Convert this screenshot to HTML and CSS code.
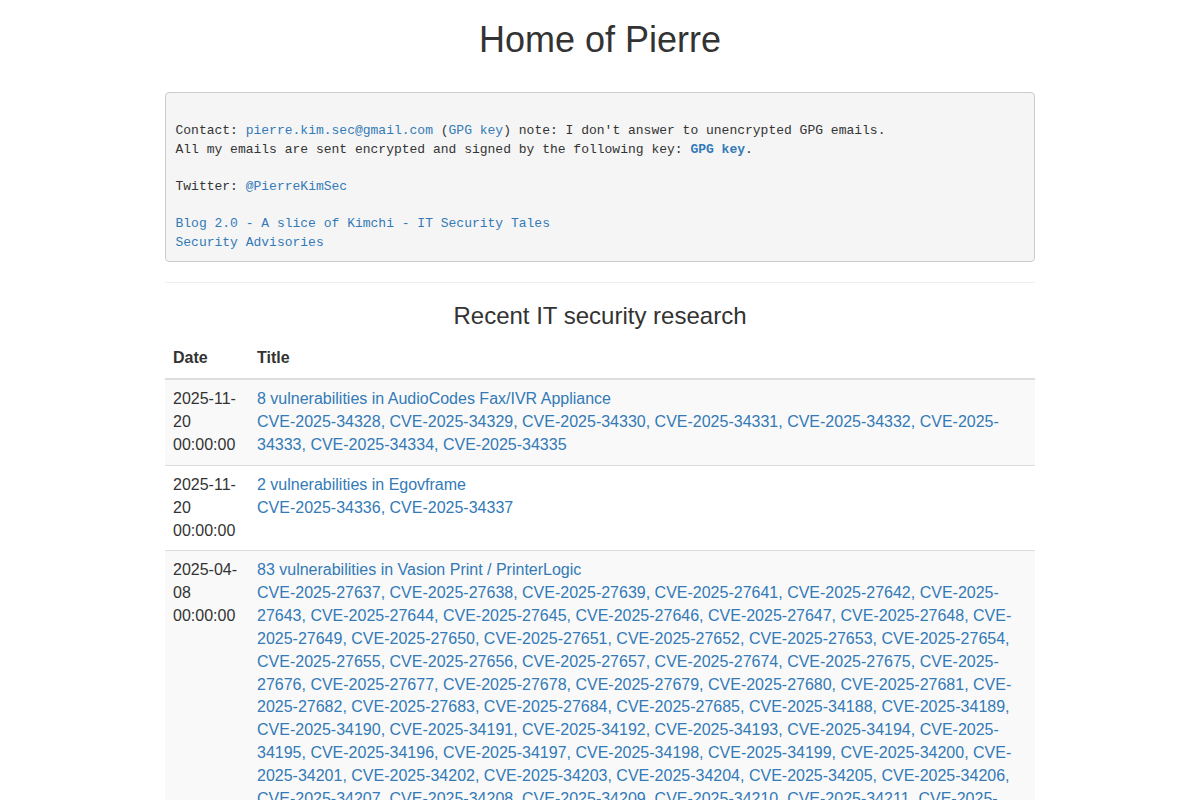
FILE: index.html
```html
<!DOCTYPE html>
<html lang="en">
<head>
<meta charset="utf-8">
<title>Home of Pierre</title>
<link rel="stylesheet" href="styles.css">
</head>
<body>
<div class="container">
  <h1 class="page-title">Home of Pierre</h1>
  <pre class="contact">

Contact: <a href="#">pierre.kim.sec@gmail.com</a> (<a href="#">GPG key</a>) note: I don't answer to unencrypted GPG emails.
All my emails are sent encrypted and signed by the following key: <a href="#"><strong>GPG key</strong></a>.

Twitter: <a href="#">@PierreKimSec</a>

<a href="#">Blog 2.0 - A slice of Kimchi - IT Security Tales</a>
<a href="#">Security Advisories</a></pre>
  <hr class="divider">
  <h3 class="section-title">Recent IT security research</h3>
  <table class="research">
    <thead>
      <tr><th class="col-date">Date</th><th>Title</th></tr>
    </thead>
    <tbody>
      <tr>
        <td>2025-11-20 00:00:00</td>
        <td><a href="#">8 vulnerabilities in AudioCodes Fax/IVR Appliance</a><br><a href="#">CVE-2025-34328, CVE-2025-34329, CVE-2025-34330, CVE-2025-34331, CVE-2025-34332, CVE-2025-34333, CVE-2025-34334, CVE-2025-34335</a></td>
      </tr>
      <tr>
        <td>2025-11-20 00:00:00</td>
        <td><a href="#">2 vulnerabilities in Egovframe</a><br><a href="#">CVE-2025-34336, CVE-2025-34337</a></td>
      </tr>
      <tr>
        <td>2025-04-08 00:00:00</td>
        <td><a href="#">83 vulnerabilities in Vasion Print / PrinterLogic</a><br><a href="#">CVE-2025-27637, CVE-2025-27638, CVE-2025-27639, CVE-2025-27641, CVE-2025-27642, CVE-2025-27643, CVE-2025-27644, CVE-2025-27645, CVE-2025-27646, CVE-2025-27647, CVE-2025-27648, CVE-2025-27649, CVE-2025-27650, CVE-2025-27651, CVE-2025-27652, CVE-2025-27653, CVE-2025-27654, CVE-2025-27655, CVE-2025-27656, CVE-2025-27657, CVE-2025-27674, CVE-2025-27675, CVE-2025-27676, CVE-2025-27677, CVE-2025-27678, CVE-2025-27679, CVE-2025-27680, CVE-2025-27681, CVE-2025-27682, CVE-2025-27683, CVE-2025-27684, CVE-2025-27685, CVE-2025-34188, CVE-2025-34189, CVE-2025-34190, CVE-2025-34191, CVE-2025-34192, CVE-2025-34193, CVE-2025-34194, CVE-2025-34195, CVE-2025-34196, CVE-2025-34197, CVE-2025-34198, CVE-2025-34199, CVE-2025-34200, CVE-2025-34201, CVE-2025-34202, CVE-2025-34203, CVE-2025-34204, CVE-2025-34205, CVE-2025-34206, CVE-2025-34207, CVE-2025-34208, CVE-2025-34209, CVE-2025-34210, CVE-2025-34211, CVE-2025-34212, CVE-2025-34213, CVE-2025-34214, CVE-2025-34215, CVE-2025-34216, CVE-2025-34217, CVE-2025-34218, CVE-2025-34219, CVE-2025-34220, CVE-2025-34221, CVE-2025-34222, CVE-2025-34223, CVE-2025-34224, CVE-2025-34225, CVE-2025-34226, CVE-2025-34227, CVE-2025-34228, CVE-2025-34229, CVE-2025-34230, CVE-2025-34231, CVE-2025-34232, CVE-2025-34233, CVE-2025-34234, CVE-2025-34235, CVE-2025-34236, CVE-2025-34237, CVE-2025-34238</a></td>
      </tr>
      <tr>
        <td>2024-12-10 00:00:00</td>
        <td><a href="#">Multiple vulnerabilities in network appliances</a></td>
      </tr>
    </tbody>
  </table>
</div>
</body>
</html>
```

FILE: styles.css
```css
* {
  box-sizing: border-box;
}

html, body {
  margin: 0;
  padding: 0;
  background: #fff;
}

body {
  font-family: "Liberation Sans", Arial, Helvetica, sans-serif;
  font-size: 16px;
  line-height: 1.428571;
  color: #333;
}

a {
  color: #337ab7;
  text-decoration: none;
}

.container {
  max-width: 900px;
  margin: 0 auto;
  padding: 0 15px;
}

.page-title {
  font-size: 36px;
  font-weight: 500;
  line-height: 1.1;
  text-align: center;
  margin: 20px 0 0;
}

.contact {
  font-family: "Liberation Mono", "Courier New", monospace;
  font-size: 13px;
  line-height: 1.428571;
  color: #333;
  background: #f5f5f5;
  border: 1px solid #ccc;
  border-radius: 4px;
  padding: 10.5px 9.5px 9px;
  margin: 32.5px 0 10px;
  white-space: pre-wrap;
  word-break: break-all;
}

.divider {
  border: 0;
  border-top: 1px solid #eee;
  margin: 20px 0;
}

.section-title {
  font-size: 24px;
  font-weight: 500;
  line-height: 1.1;
  text-align: center;
  margin: 20px 0 10px;
}

.research {
  width: 100%;
  border-collapse: collapse;
  border-spacing: 0;
  margin-bottom: 20px;
}

.research th,
.research td {
  padding: 8px;
  text-align: left;
  line-height: 1.428571;
}

.research th {
  font-weight: bold;
  vertical-align: bottom;
  border-bottom: 2px solid #ddd;
}

.research .col-date {
  width: 84px;
}

.research td {
  vertical-align: top;
  border-top: 1px solid #ddd;
}

.research tbody tr:nth-child(odd) {
  background: #f9f9f9;
}
```
